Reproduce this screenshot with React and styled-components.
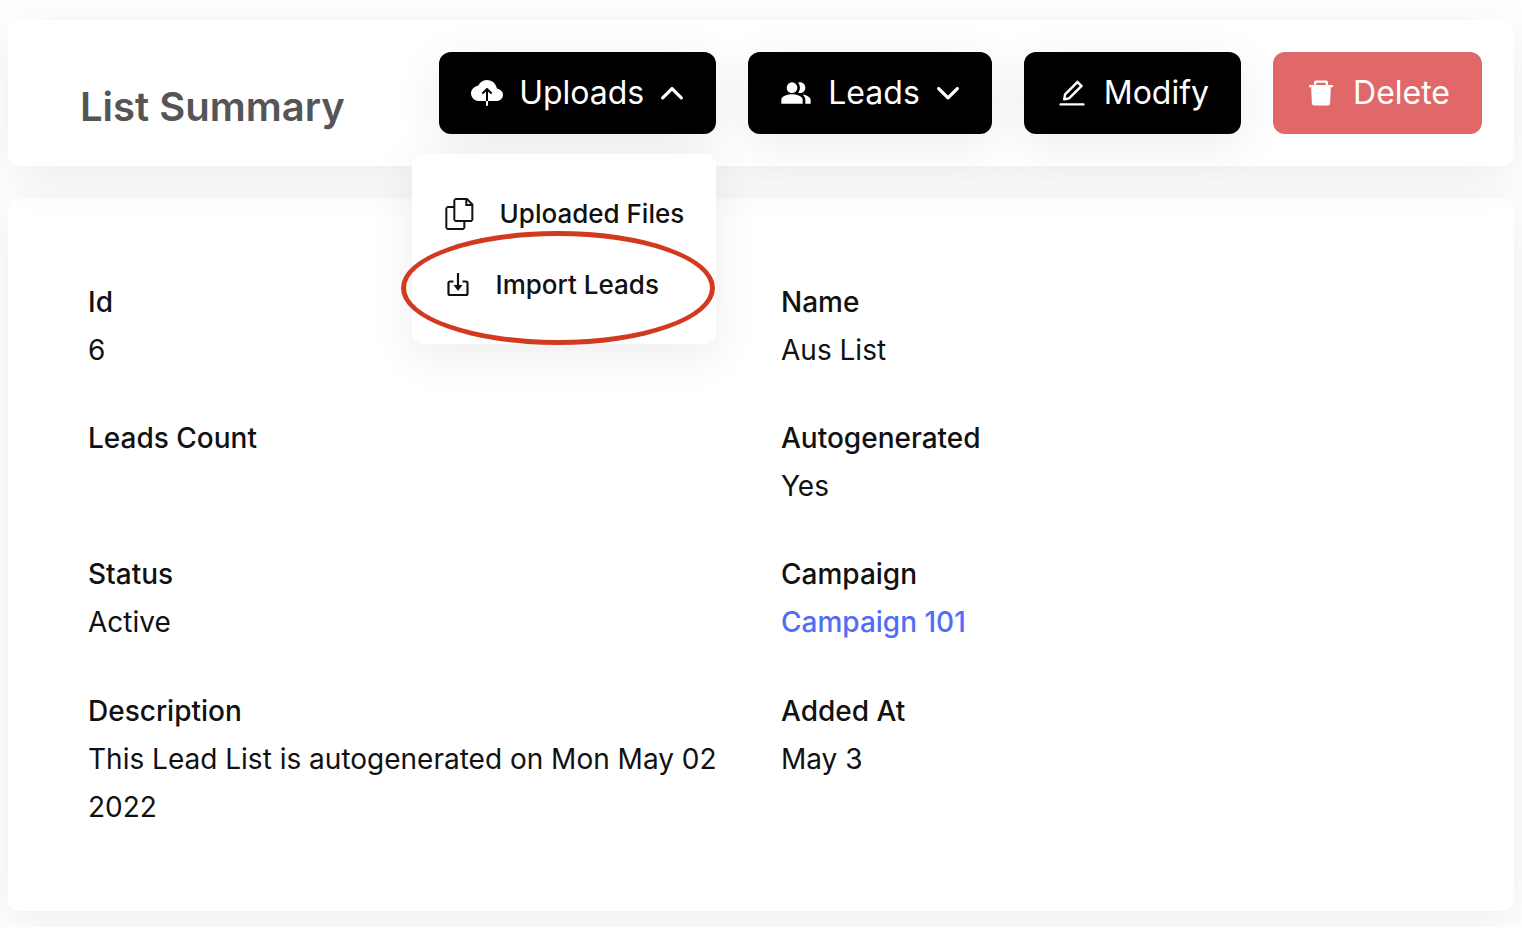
import React, { useState } from "react";
import styled, { createGlobalStyle } from "styled-components";
import { IoCloudUpload } from "react-icons/io5";
import { MdPeopleAlt } from "react-icons/md";
import { AiOutlineEdit, AiFillDelete } from "react-icons/ai";
import { VscFiles } from "react-icons/vsc";

const GlobalStyle = createGlobalStyle`
  * {
    box-sizing: border-box;
  }

  body {
    margin: 0;
    background-color: #fff;
    color: #111;
    font-family: Inter, "Liberation Sans", sans-serif;
    font-size: 28px;
    line-height: 48px;
  }
`;

const shadow = "0 10px 48px rgba(0, 0, 0, 0.08)";

const Page = styled.main`
  display: flex;
  flex-direction: column;
  gap: 32px;
  padding: 20px 8px 16px;
`;

const Card = styled.section`
  background-color: #fff;
  border-radius: 12px;
  box-shadow: ${shadow};
`;

const Header = styled(Card)`
  position: relative;
  z-index: 1;
  display: flex;
  justify-content: space-between;
  padding: 32px;
`;

const Title = styled.h1`
  align-self: flex-end;
  margin: 0;
  padding-left: 40px;
  color: #555;
  font-size: 40px;
  font-weight: 600;
  line-height: 54px;
`;

const Actions = styled.div`
  display: flex;
  gap: 32px;
`;

const Button = styled.button`
  display: flex;
  align-items: center;
  gap: 16px;
  height: 82px;
  padding: 0 32px;
  border: none;
  border-radius: 12px;
  background-color: ${props => (props.$danger ? "#e06868" : "#000")};
  box-shadow: ${props => (props.$danger ? "none" : shadow)};
  color: #fff;
  font-family: inherit;
  font-size: 32px;
  font-weight: 400;
  line-height: 40px;
  white-space: nowrap;
  cursor: pointer;
`;

const Dropdown = styled.div`
  position: relative;
`;

const Menu = styled.ul`
  position: absolute;
  top: calc(100% + 20px);
  right: 0;
  margin: 0;
  padding: 24px 0;
  border-radius: 12px;
  background-color: #fff;
  box-shadow: ${shadow};
  list-style: none;
`;

const MenuLink = styled.a`
  display: flex;
  align-items: center;
  gap: 24px;
  height: 71px;
  padding: 0 32px;
  color: #111;
  font-size: 26px;
  font-weight: 500;
  text-decoration: none;
  white-space: nowrap;
`;

const Highlight = styled.span`
  position: absolute;
  top: 77px;
  left: -11px;
  right: 1px;
  height: 114px;
  border: 5px solid #d13a21;
  border-radius: 50%;
  pointer-events: none;
`;

const Details = styled(Card)`
  padding: 80px;
`;

const Fields = styled.dl`
  display: grid;
  grid-template-columns: 1fr 1fr;
  gap: 40px;
  margin: 0;
`;

const Label = styled.dt`
  font-weight: 500;
`;

const Value = styled.dd`
  min-height: 48px;
  margin: 0;
`;

const ValueLink = styled.a`
  display: inline-block;
  border-bottom: 1px solid transparent;
  color: #526df5;
  font-weight: 500;
  text-decoration: none;

  &:hover {
    border-bottom-color: currentColor;
  }
`;

const Caret = ({ up }) => (
  <svg
    width="24"
    height="24"
    viewBox="0 0 24 24"
    fill="none"
    stroke="currentColor"
    strokeWidth="3.3"
    strokeLinecap="round"
    strokeLinejoin="round"
  >
    <path d={up ? "M2.7 16.800 12 7.600 21.300 16.800" : "M2.7 7.600 12 16.800 21.300 7.600"} />
  </svg>
);

const ImportIcon = () => (
  <svg width="28" height="28" viewBox="0 0 28 28" fill="none" stroke="currentColor" strokeWidth="2.2">
    <path d="M9.5 10.5H6Q4.5 10.5 4.5 12V22.5Q4.5 24 6 24H22Q23.5 24 23.5 22.5V12Q23.5 10.5 22 10.5H18.5" />
    <path d="M14 2V15" />
    <path d="M9.5 14H18.5L14 20Z" fill="currentColor" stroke="none" />
  </svg>
);

const fields = [
  { label: "Id", value: "6" },
  { label: "Name", value: "Aus List" },
  { label: "Leads Count", value: "" },
  { label: "Autogenerated", value: "Yes" },
  { label: "Status", value: "Active" },
  { label: "Campaign", value: "Campaign 101", href: "#campaign" },
  { label: "Description", value: "This Lead List is autogenerated on Mon May 02 2022" },
  { label: "Added At", value: "May 3" },
];

export default function App() {
  const [open, setOpen] = useState(true);

  return (
    <>
      <GlobalStyle />
      <Page>
        <Header as="header">
          <Title>List Summary</Title>
          <Actions>
            <Dropdown>
              <Button aria-expanded={open} onClick={() => setOpen(!open)}>
                <IoCloudUpload size={32} />
                Uploads
                <Caret up={open} />
              </Button>
              {open && (
                <Menu>
                  <li>
                    <MenuLink href="#files">
                      <VscFiles size={32} />
                      Uploaded Files
                    </MenuLink>
                  </li>
                  <li>
                    <MenuLink href="#import">
                      <ImportIcon />
                      Import Leads
                    </MenuLink>
                    <Highlight />
                  </li>
                </Menu>
              )}
            </Dropdown>
            <Button>
              <MdPeopleAlt size={32} />
              Leads
              <Caret />
            </Button>
            <Button>
              <AiOutlineEdit size={32} />
              Modify
            </Button>
            <Button $danger>
              <AiFillDelete size={32} />
              Delete
            </Button>
          </Actions>
        </Header>
        <Details>
          <Fields>
            {fields.map(field => (
              <div key={field.label}>
                <Label>{field.label}</Label>
                <Value>
                  {field.href ? <ValueLink href={field.href}>{field.value}</ValueLink> : field.value}
                </Value>
              </div>
            ))}
          </Fields>
        </Details>
      </Page>
    </>
  );
}
